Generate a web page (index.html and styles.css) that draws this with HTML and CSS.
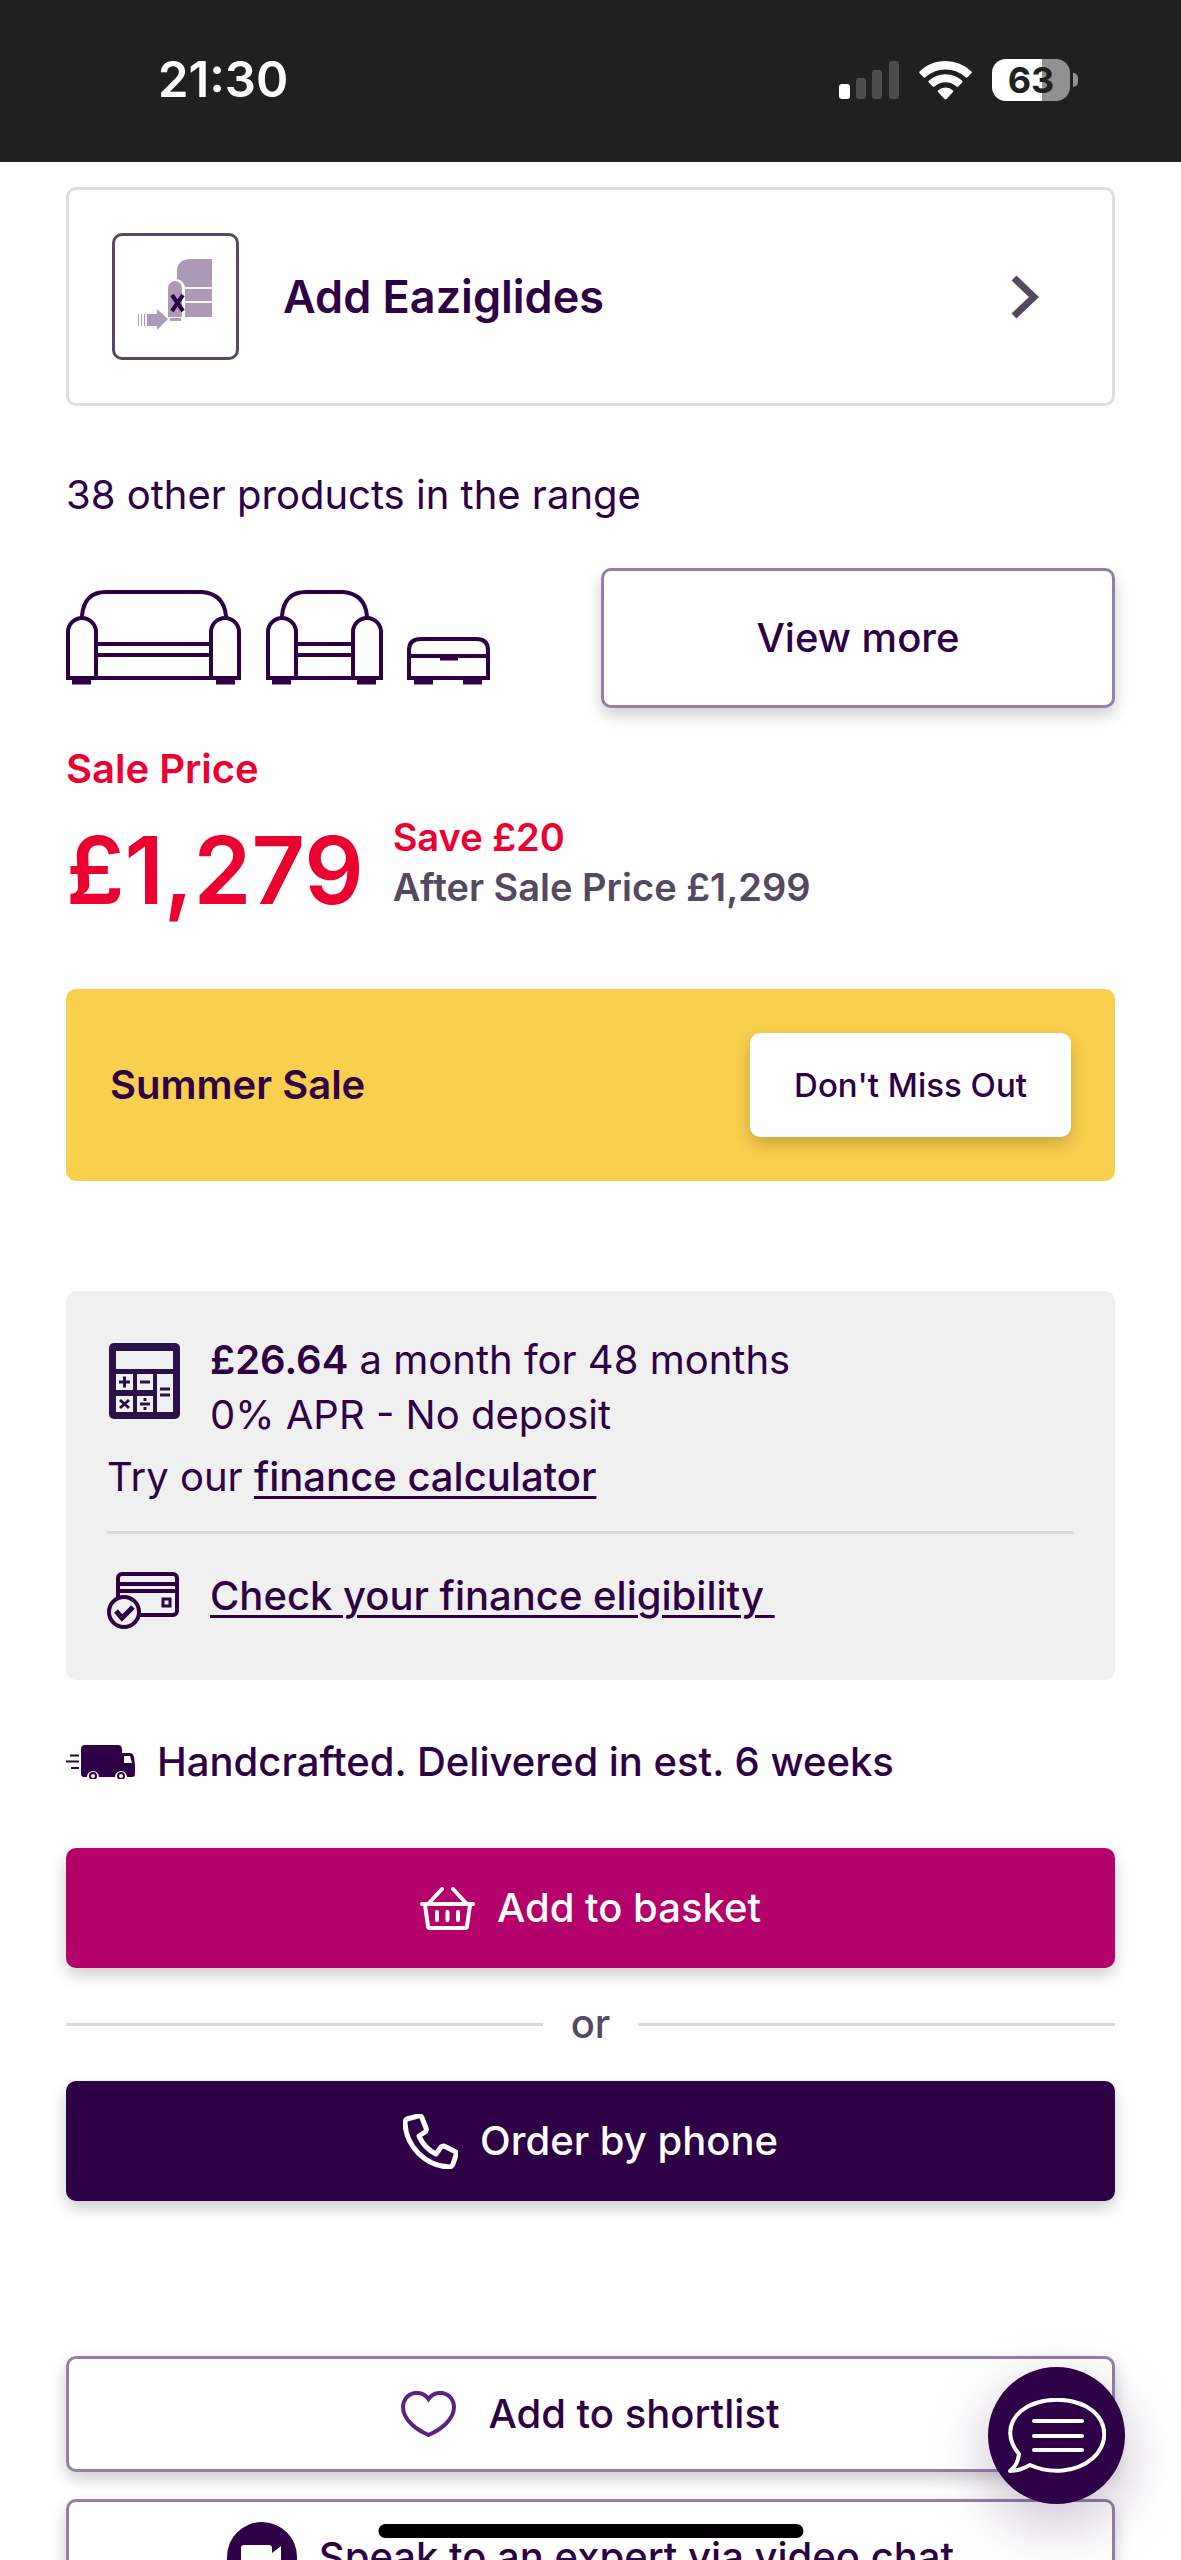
FILE: index.html
```html
<!DOCTYPE html>
<html lang="en">
<head>
    <meta charset="UTF-8">
    <meta name="viewport" content="width=device-width, initial-scale=1.0">
    <title>Sofa - Product</title>
    <link rel="stylesheet" href="styles.css">
</head>
<body>
    <header class="status-bar">
        <span class="time">21:30</span>
        <div class="status-icons">
            <svg width="60" height="38" viewBox="0 0 60 38">
                <rect x="0" y="23" width="11" height="15" rx="3" fill="#fff"/>
                <rect x="17" y="17" width="10" height="21" rx="3" fill="#4d4d4d"/>
                <rect x="33" y="9" width="10" height="29" rx="3" fill="#4d4d4d"/>
                <rect x="50" y="0" width="10" height="38" rx="3" fill="#4d4d4d"/>
            </svg>
            <svg width="53" height="39" viewBox="0 0 53 39" fill="#fff">
                <path d="M26.500 0C16.500 0 7.300 4 .6 10.500q-.8.900 0 1.800l4 4q.8.700 1.700 0A29.500 29.500 0 0 1 26.500 8.400a29.500 29.500 0 0 1 20.200 7.900q.9.700 1.700 0l4-4q.8-.9 0-1.800A37.500 37.500 0 0 0 26.500 0z"/>
                <path d="M26.500 13.200a24 24 0 0 0-16.700 6.600q-.8.900 0 1.700l4 4q.9.800 1.800.1a16 16 0 0 1 21.800 0q.9.700 1.800-.1l4-4q.8-.8 0-1.700a24 24 0 0 0-16.700-6.600z"/>
                <path d="M26.500 26.500a11 11 0 0 0-7.500 3q-.8.800 0 1.600l6.500 7q1 .9 2 0l6.500-7q.8-.8 0-1.600a11 11 0 0 0-7.500-3z"/>
            </svg>
            <div class="battery"><span>63</span></div>
        </div>
    </header>

    <main class="product">
        <a href="#" class="addon">
            <span class="addon-icon">
                <svg width="80" height="80" viewBox="0 0 80 80" fill="#ac9ab8">
                    <path d="M41 23V13Q42 2 55 2H76V30H49Q47 23 41 22z"/>
                    <rect x="49" y="32" width="27" height="12"/>
                    <rect x="49" y="46" width="27" height="14"/>
                    <path d="M32 60V31a7 7 0 0 1 14 0V60z"/>
                    <rect x="34" y="61" width="11" height="3"/>
                    <path d="M2 57h1v12H2zM5 57h1v12H5zM8 57h1v12H8zM11 57H21V52L32 62 21 73V69H11z"/>
                    <path d="M36 38L47 54M47 38L36 54" stroke="#2e0046" stroke-width="4"/>
                </svg>
            </span>
            <span class="addon-title">Add Eaziglides</span>
            <svg class="chevron" width="28" height="44" viewBox="0 0 28 44" fill="none" stroke="#544960" stroke-width="7">
                <path d="M3 3L23 22 3 41"/>
            </svg>
        </a>

        <p class="range-text">38 other products in the range</p>
        <div class="range">
            <svg class="range-icons" width="425" height="96" viewBox="0 0 425 96" fill="none" stroke="#2e0046" stroke-width="4">
                <!-- sofa -->
                <path d="M16 29V26Q18 2 40 2H136Q158 4 160 26V29M30 54H146M30 65H146"/>
                <path d="M2 88V42a14 14 0 0 1 28 0V88M145 88V42a14 14 0 0 1 28 0V88M0 88H175"/>
                <path d="M6 92H25M150 92H169" stroke-width="5"/>
                <!-- chair -->
                <path d="M216 29V26Q218 2 240 2H277Q299 4 301 26V29M230 54H287M230 65H287"/>
                <path d="M202 88V42a14 14 0 0 1 28 0V88M287 88V42a14 14 0 0 1 28 0V88M200 88H317"/>
                <path d="M206 92H225M291 92H310" stroke-width="5"/>
                <!-- footstool -->
                <path d="M343 88V60Q343 49 355 49H410Q422 49 422 60V88M343 66H422M341 88H424"/>
                <path d="M374 68H392M348 92H367M397 92H416" stroke-width="5"/>
            </svg>
            <button type="button" class="btn btn-outline btn-view">View more</button>
        </div>

        <p class="price-label">Sale Price</p>
        <div class="price-row">
            <strong class="price">£1,279</strong>
            <div class="price-info">
                <p class="save">Save £20</p>
                <p class="after">After Sale Price £1,299</p>
            </div>
        </div>

        <section class="banner">
            <span>Summer Sale</span>
            <button type="button" class="btn btn-small">Don't Miss Out</button>
        </section>

        <section class="finance">
            <div class="finance-row">
                <svg class="calculator" width="73" height="76" viewBox="0 0 73 76" fill="none" stroke="#2b114a" stroke-width="3">
                    <rect x="2" y="0" width="71" height="76" rx="5" fill="#2b114a" stroke="none"/>
                    <path d="M9 8h57v18H9zM9 31h17v16H9zM30 31h16v16H30zM50 31h16v38H50zM9 53h17v16H9zM30 53h16v16H30z" fill="#f0f0f0" stroke="none"/>
                    <path d="M12 39h11M17.500 33.500v11M33 39h10M53 46h10M53 52h10M13 57l9 8M22 57l-9 8M33 61h10M38 55v3M38 64v3"/>
                </svg>
                <p><strong>£26.64</strong> a month for 48 months<br>0% APR - No deposit</p>
            </div>
            <p class="finance-try">Try our <a href="#">finance calculator</a></p>
            <hr>
            <div class="finance-row check">
                <svg width="73" height="57" viewBox="0 0 73 57" fill="none" stroke="#2e0046" stroke-width="4">
                    <rect x="11" y="2" width="59" height="41" rx="4"/>
                    <path d="M11 12H70M11 19H70"/>
                    <rect x="56" y="27" width="7" height="7" stroke-width="3"/>
                    <circle cx="17" cy="40" r="15" fill="#f0f0f0"/>
                    <path d="M9 39l6 7 11-11" stroke-width="5"/>
                </svg>
                <a href="#">Check your finance eligibility&nbsp;</a>
            </div>
        </section>

        <p class="delivery">
            <svg width="69" height="34" viewBox="0 0 69 34" fill="#2e0046">
                <path d="M19 0H52q4 0 4 4V8h8q3 0 4 4l1 8v9q0 3-3 3H61a6 6 0 0 0-12 0H33a6 6 0 0 0-12 0H18q-3 0-3-3V4q0-4 4-4z"/>
                <path d="M58 11h6l2 7h-8z" fill="#fff"/>
                <path d="M4 10.500h9M0 16.500h13M5 23h8" stroke="#2e0046" stroke-width="2"/>
                <circle cx="27" cy="31" r="3" fill="none" stroke="#2e0046" stroke-width="2"/>
                <circle cx="55" cy="31" r="3" fill="none" stroke="#2e0046" stroke-width="2"/>
            </svg>
            Handcrafted. Delivered in est. 6 weeks
        </p>

        <button type="button" class="btn btn-basket">
            <svg width="55" height="43" viewBox="0 0 55 43" fill="none" stroke="#fff" stroke-width="4" stroke-linecap="round" stroke-linejoin="round">
                <path d="M2 17H53M5 18l3 21q0 2 2 2H45q2 0 2-2l3-21M9 16L22 2M46 16L33 2M17 25v8M27.500 25v8M38 25v8"/>
            </svg>
            Add to basket
        </button>
        <div class="or">or</div>
        <button type="button" class="btn btn-phone">
            <svg width="55" height="55" viewBox="0 0 55 55" fill="none" stroke="#fff" stroke-width="5" stroke-linejoin="round">
                <path d="M4 5L15 2q3-1 4 2l4 10q1 2-1 4l-6 4Q21 34 33 40l5-7q1-1 3-1l10 5q3 1 2 4L50 50q-1 3-4 3C22 52 3 32 2 9Q2 6 4 5z"/>
            </svg>
            Order by phone
        </button>

        <div class="more-actions">
            <button type="button" class="btn btn-outline btn-shortlist">
                <svg width="55" height="46" viewBox="0 0 55 46" fill="none" stroke="#5b2286" stroke-width="4">
                    <path d="M27.500 8C23 1 16 2 14 2 6 3 2 10 2 16c0 13 14 23 25.500 28C39 39 53 29 53 16c0-6-4-13-12-14-2 0-9-1-13.500 6z"/>
                </svg>
                Add to shortlist
            </button>
            <button type="button" class="btn btn-outline">
                <svg width="70" height="70" viewBox="0 0 70 70">
                    <circle cx="35" cy="35" r="35" fill="#2e0046"/>
                    <path d="M17 23H42q3 0 3 3v5l9-7V46l-9-7v5q0 3-3 3H17q-3 0-3-3V26q0-3 3-3z" fill="#fff"/>
                </svg>
                Speak to an expert via video chat
            </button>
        </div>
    </main>

    <button type="button" class="chat" aria-label="Chat">
        <svg width="98" height="76" viewBox="0 0 98 76" fill="none" stroke="#fff" stroke-width="4" stroke-linejoin="round" stroke-linecap="round">
            <path d="M11 56C-1 42-1 25 13 13 32-2 66-2 85 13c15 13 15 33 0 47C68 75 42 76 22 67 15 71 9 73 2 73 8 68 10 64 11 56z"/>
            <path d="M26 23H74M26 38H74M26 52H74"/>
        </svg>
    </button>
    <div class="home-indicator"></div>
</body>
</html>
```
FILE: styles.css
```css
* {
    box-sizing: border-box;
}

body {
    margin: 0;
    height: 100vh;
    overflow: hidden;
    background: #fff;
    color: #2e0046;
    font-family: Inter, "Liberation Sans", sans-serif;
    font-size: 40px;
    line-height: 48px;
}

p {
    margin: 0;
}

svg {
    flex: none;
}

a {
    color: inherit;
}

/* status bar */
.status-bar {
    display: flex;
    justify-content: space-between;
    align-items: center;
    height: 162px;
    padding: 0 102px 2px 158px;
    background: #202020;
    color: #fff;
}

.time {
    font-size: 49px;
    font-weight: 600;
}

.status-icons {
    display: flex;
    align-items: center;
    gap: 20px;
}

.battery {
    position: relative;
    width: 78px;
    margin-right: 9px;
    border-radius: 14px;
    background: linear-gradient(to right, #fff 64%, #919191 64%);
    color: #202020;
    font-size: 36px;
    font-weight: 700;
    line-height: 42px;
    text-align: center;
}

.battery::after {
    content: "";
    position: absolute;
    right: -8px;
    top: 14px;
    width: 5px;
    height: 14px;
    border-radius: 0 6px 6px 0;
    background: #919191;
}

.product {
    padding: 25px 66px 0;
}

/* buttons */
.btn {
    display: flex;
    justify-content: center;
    align-items: center;
    gap: 22px;
    width: 100%;
    height: 120px;
    padding: 0;
    border: 0;
    border-radius: 10px;
    background: #fff;
    color: #2e0046;
    font: inherit;
    font-weight: 500;
    box-shadow: 0 7px 16px rgba(0, 0, 0, 0.2);
    cursor: pointer;
}

.btn-outline {
    height: 116px;
    border: 3px solid #967fa6;
}

.btn-basket {
    background: #b3006b;
    color: #fff;
}

.btn-phone {
    background: #2e0046;
    color: #fff;
}

.btn-shortlist {
    gap: 32px;
}

.btn-small {
    width: auto;
    height: 104px;
    padding: 0 44px;
    font-size: 33px;
}

/* add-on card */
.addon {
    display: flex;
    align-items: center;
    height: 219px;
    padding: 0 73px 0 43px;
    border: 3px solid #dedede;
    border-radius: 10px;
    text-decoration: none;
}

.addon-icon {
    display: flex;
    justify-content: center;
    align-items: center;
    width: 127px;
    height: 127px;
    border: 3px solid #544960;
    border-radius: 10px;
}

.addon-title {
    flex: 1;
    margin-left: 44px;
    font-size: 45px;
    font-weight: 600;
}

/* range */
.range-text {
    margin-top: 65px;
}

.range {
    display: flex;
    justify-content: space-between;
    align-items: center;
    margin-top: 49px;
}

.btn-view {
    width: 49%;
    height: 140px;
}

/* price */
.price-label {
    margin-top: 37px;
    color: #ec002f;
    font-weight: 600;
}

.price-row {
    display: flex;
    gap: 29px;
    margin-top: 19px;
    font-weight: 600;
}

.price {
    color: #ec002f;
    font-size: 93px;
    font-weight: 600;
    line-height: 116px;
}

.price-info {
    font-size: 38px;
    line-height: 50px;
}

.save {
    color: #ec002f;
}

.after {
    color: #544960;
}

/* sale banner */
.banner {
    display: flex;
    justify-content: space-between;
    align-items: center;
    height: 192px;
    margin-top: 61px;
    padding: 0 44px;
    border-radius: 10px;
    background: #f9cf4e;
    font-weight: 600;
}

/* finance */
.finance {
    margin-top: 110px;
    padding: 41px 41px 51px;
    border-radius: 10px;
    background: #f0f0f0;
    line-height: 55px;
}

.finance-row {
    display: flex;
    align-items: flex-start;
    gap: 30px;
}

.calculator {
    margin-top: 11px;
}

.check {
    line-height: 48px;
}

.finance strong {
    font-weight: 600;
}

.finance a {
    font-weight: 500;
    text-decoration-thickness: 3px;
    text-underline-offset: 5px;
}

.finance-try {
    margin-top: 7px;
}

.finance hr {
    height: 3px;
    margin: 27px 0 38px;
    border: 0;
    background: #dadada;
}

.delivery {
    display: flex;
    align-items: center;
    gap: 22px;
    margin: 58px 0 62px;
    font-weight: 500;
}

.or {
    display: flex;
    align-items: center;
    gap: 28px;
    margin: 32px 0 33px;
    color: #544960;
    font-weight: 500;
}

.or::before,
.or::after {
    content: "";
    flex: 1;
    height: 3px;
    background: #dadada;
}

.more-actions {
    display: grid;
    gap: 27px;
    margin-top: 155px;
}

/* floating chat button */
.chat {
    position: fixed;
    right: 56px;
    bottom: 56px;
    display: flex;
    justify-content: center;
    align-items: center;
    width: 137px;
    height: 137px;
    padding: 0;
    border: 0;
    border-radius: 50%;
    background: #2e0046;
    box-shadow: 0 20px 60px rgba(46, 0, 70, 0.25);
}

.home-indicator {
    position: fixed;
    left: 50%;
    bottom: 22px;
    width: 36%;
    height: 14px;
    border-radius: 7px;
    background: #000;
    transform: translateX(-50%);
}
```
